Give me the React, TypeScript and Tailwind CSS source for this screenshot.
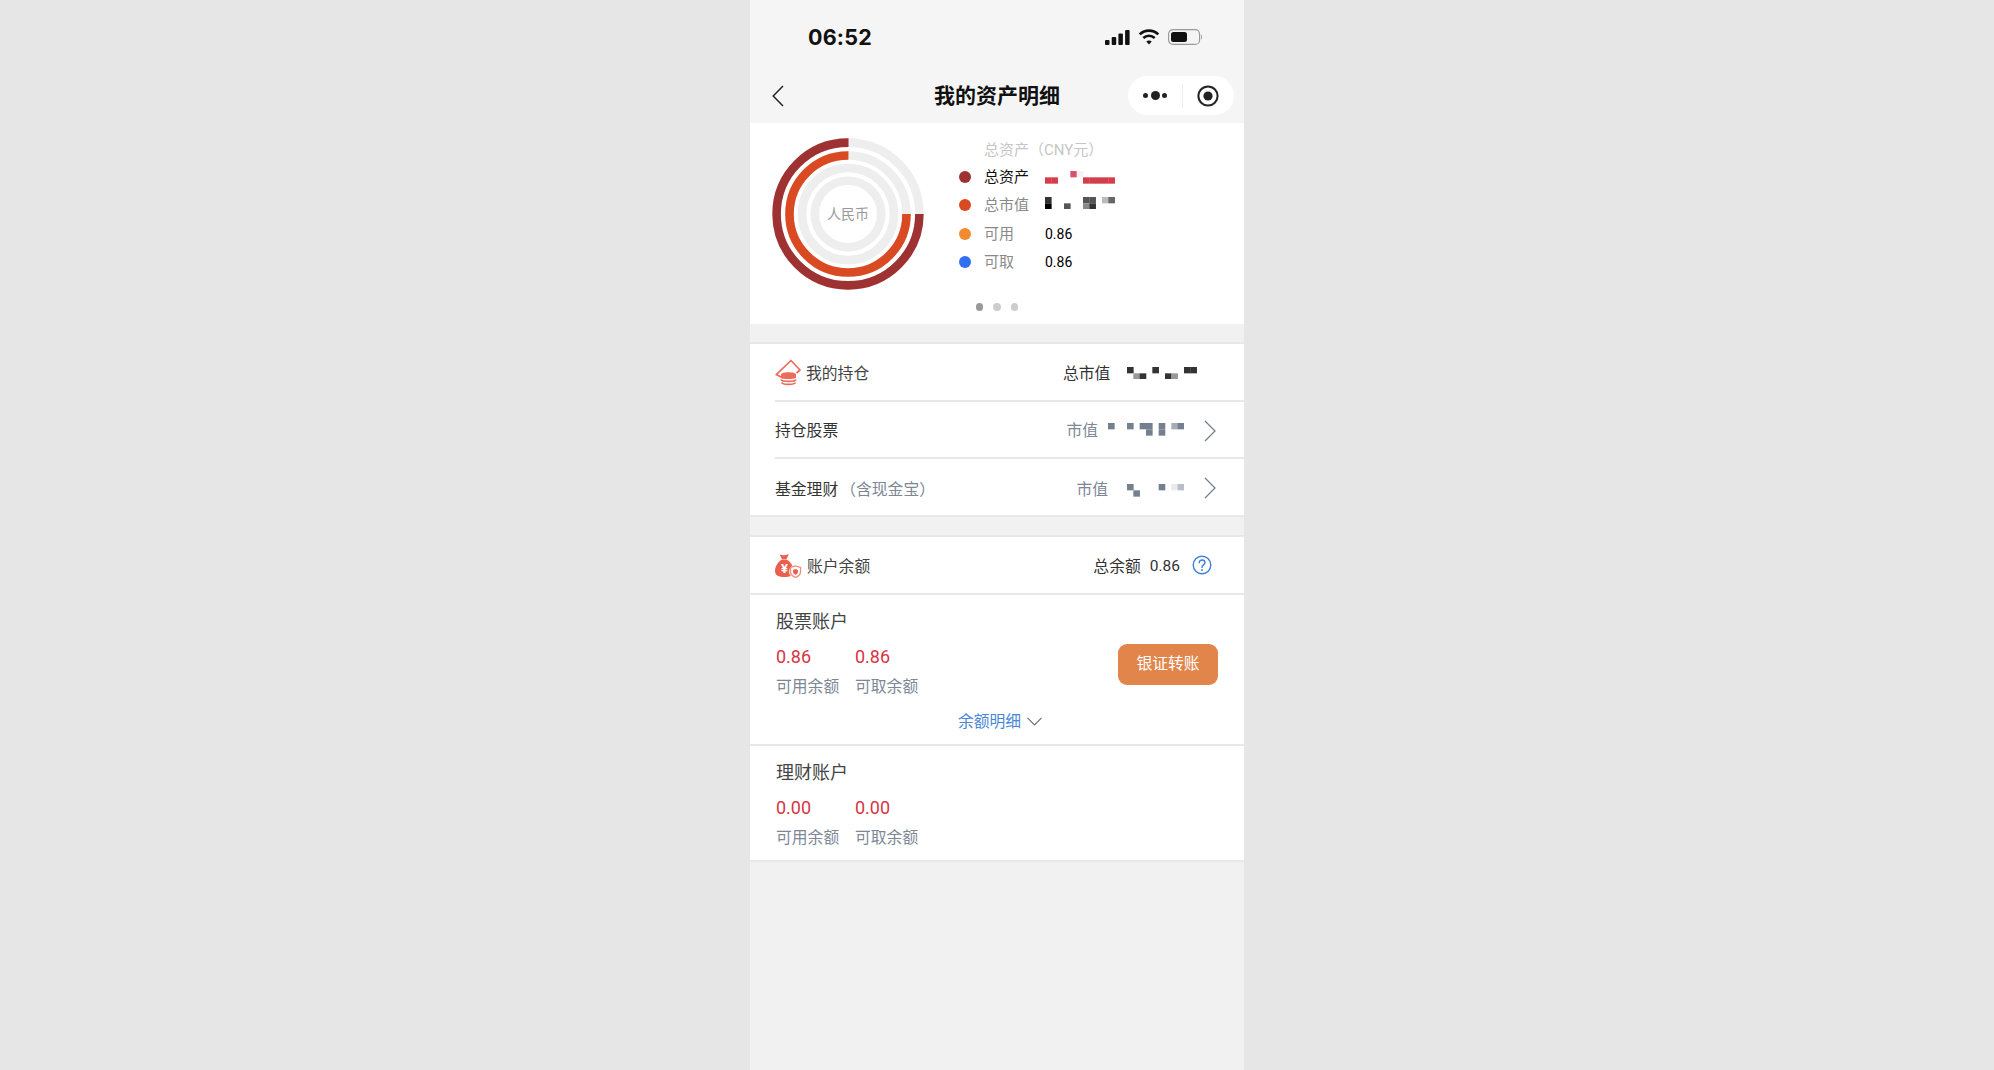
type Cell = [number, number, string];

const CJK = "font-['Roboto','Noto_Sans_CJK_SC',sans-serif]";

const cell = 19 / 3;

function Mosaic({ cols, rows = 2, cells, className }: { cols: number; rows?: number; cells: Cell[]; className?: string }) {
  return (
    <svg width={cols * cell} height={rows * cell} className={className}>
      {cells.map(([x, y, c], i) => (
        <rect key={i} x={x * cell} y={y * cell} width={cell + 0.3} height={cell} fill={c} />
      ))}
    </svg>
  );
}

const red = "#d43d4b";
const slate = "#75808f";

const mosaicAsset: Cell[] = [
  [0, 1, red], [1, 1, red], [4, 0, "#d6536b"], [5, 0, "#fbeef0"],
  [6, 1, red], [7, 1, red], [8, 1, red], [9, 1, red], [10, 1, red],
];
const mosaicLegend: Cell[] = [
  [0, 0, "#333333"], [0, 1, "#000000"], [3, 1, "#555555"],
  [6, 0, "#555555"], [7, 0, "#555555"], [6, 1, "#888888"], [7, 1, "#333333"],
  [9, 0, "#bbbbbb"], [10, 0, "#666666"],
];
const mosaicTotal: Cell[] = [
  [0, 0, "#333333"], [1, 1, "#999999"], [2, 1, "#333333"], [4, 0, "#333333"],
  [6, 1, "#333333"], [7, 1, "#999999"], [9, 0, "#333333"], [10, 0, "#333333"],
];
const mosaicStock: Cell[] = [
  [0, 0, slate], [3, 0, slate], [5, 0, slate], [6, 0, slate], [6, 1, slate],
  [8, 0, slate], [8, 1, slate], [10, 0, "#a5adb8"], [11, 0, slate],
];
const mosaicFund: Cell[] = [
  [0, 0, slate], [1, 1, slate], [5, 0, slate], [7, 0, "#e8eaed"], [8, 0, "#b8bec7"],
];

function StatusIcons() {
  return (
    <div className="flex items-center gap-[8px]">
      <svg width="25" height="15" viewBox="0 0 25 15" fill="#111">
        <rect x="0" y="10" width="4.5" height="5" rx="1" />
        <rect x="6.7" y="7" width="4.5" height="8" rx="1" />
        <rect x="13.4" y="3.5" width="4.5" height="11.5" rx="1" />
        <rect x="20.1" y="0" width="4.5" height="15" rx="1" />
      </svg>
      <svg width="22" height="16" viewBox="0 0 21 16" fill="none" stroke="#111" strokeWidth="2.6">
        <path d="M1.2 5.4 C6.5 0.4 14.5 0.4 19.8 5.4" />
        <path d="M4.8 9 C8 6 13 6 16.2 9" />
        <path d="M10.5 15.5 L7.8 12.4 C9.3 11.2 11.7 11.2 13.2 12.4 Z" fill="#111" stroke="none" />
      </svg>
      <svg width="35" height="16" viewBox="0 0 35 16" fill="none">
        <rect x="0.6" y="0.6" width="31" height="14.8" rx="4.5" stroke="#9a9a9a" strokeWidth="1.2" />
        <rect x="3" y="3" width="16" height="10" rx="2.5" fill="#111" />
        <path d="M33.2 5.5 C34.4 6 34.4 10 33.2 10.5 Z" fill="#9a9a9a" />
      </svg>
    </div>
  );
}

function Donut() {
  const rings = [
    { r: 71.4, color: "#9e3232", fill: true },
    { r: 58.5, color: "#d94a22", fill: true },
    { r: 46, color: "#eeeeee", fill: false },
    { r: 33.2, color: "#eeeeee", fill: false },
  ];
  return (
    <div className="relative w-[152px] h-[152px] shrink-0">
      <svg width="152" height="152" viewBox="-76 -76 152 152" fill="none">
        {rings.map((ring) => {
          const c = 2 * Math.PI * ring.r;
          return (
            <g key={ring.r}>
              <circle r={ring.r} stroke="#eeeeee" strokeWidth="8.6" />
              {ring.fill && (
                <circle r={ring.r} stroke={ring.color} strokeWidth="8.6" strokeDasharray={`${c * 0.75} ${c}`} />
              )}
            </g>
          );
        })}
      </svg>
      <div className="absolute inset-0 flex items-center justify-center text-[14px] text-[#999999]">人民币</div>
    </div>
  );
}

function LegendRow({ color, label, labelClass, children }: { color: string; label: string; labelClass: string; children: React.ReactNode }) {
  return (
    <div className="flex items-center h-[28px]">
      <span className="w-[12px] h-[12px] rounded-full" style={{ backgroundColor: color }} />
      <span className={`ml-[13px] w-[61px] text-[15px] ${labelClass}`}>{label}</span>
      {children}
    </div>
  );
}

function HoldingIcon({ className }: { className?: string }) {
  return (
    <svg width="26" height="27" viewBox="0 0 26 27" fill="none" className={className}>
      <path d="M8 19 L1.2 15.6 L16 1.5 L25 11 L21.5 14" stroke="#ee6a5a" strokeWidth="1.7" strokeLinejoin="round" />
      <path d="M6 15.5 C6 12.5 21 12.5 21 15.5 V18.5 C21 20.5 6 20.5 6 18.5 Z" fill="#ee6a5a" />
      <path d="M6 20.5 C6.5 23 20.5 23 21 20.5 M6.5 23.5 C7.5 26 19.5 26 20.5 23.5" stroke="#ee6a5a" strokeWidth="1.6" />
    </svg>
  );
}

function BagIcon({ className }: { className?: string }) {
  return (
    <svg width="27" height="25" viewBox="0 0 27 25" fill="none" className={className}>
      <path d="M4.5 1.5 Q9 3.2 14 1 L11.5 6 H7 Z" fill="#ea5f4d" />
      <path d="M7 6.5 H11.5 C16 9 18.8 14 18.8 18 C18.8 22.5 15 24 9.4 24 C3.8 24 0 22.5 0 18 C0 14 2.5 9 7 6.5 Z" fill="#ea5f4d" />
      <text x="9.4" y="19.5" textAnchor="middle" fontSize="13" fontWeight="700" fill="#ffffff" fontFamily="Roboto, sans-serif">¥</text>
      <circle cx="20.5" cy="18.5" r="6.5" fill="#ffffff" />
      <path d="M20.5 13 L25.5 14.5 V18.5 C25.5 21.5 23 23.5 20.5 24.5 C18 23.5 15.5 21.5 15.5 18.5 V14.5 Z" fill="none" stroke="#ee8a7c" strokeWidth="1.3" />
      <path d="M20.5 16 L23 17 V18.7 C23 20 22 21 20.5 21.7 C19 21 18 20 18 18.7 V17 Z" fill="#ea5f4d" />
    </svg>
  );
}

function HelpIcon({ className }: { className?: string }) {
  return (
    <svg width="20" height="20" viewBox="0 0 20 20" fill="none" className={className}>
      <circle cx="10" cy="10" r="8.8" stroke="#3f7fd6" strokeWidth="1.4" />
      <path d="M7.2 7.8 C7.2 3.9 13 4.2 13 7.6 C13 10 10 9.8 10 12.4" stroke="#3f7fd6" strokeWidth="1.4" strokeLinecap="round" />
      <circle cx="10" cy="15" r="0.95" fill="#3f7fd6" />
    </svg>
  );
}

function Chevron({ className }: { className?: string }) {
  return (
    <svg width="12" height="22" viewBox="0 0 12 22" fill="none" className={className}>
      <path d="M1 1 L11 11 L1 21" stroke="#75808f" strokeWidth="1.3" />
    </svg>
  );
}

function Stat({ value, label }: { value: string; label: string }) {
  return (
    <div className="w-[79px]">
      <div className="h-[26px] flex items-center text-[18px] text-[#d63644]">{value}</div>
      <div className="mt-[6px] h-[22px] flex items-center text-[15.8px] text-[#7d8796] whitespace-nowrap">{label}</div>
    </div>
  );
}

export default function App() {
  return (
    <div className={`min-h-screen bg-[#e6e6e6] flex justify-center ${CJK}`}>
      <div className="w-[494px] h-[1070px] bg-[#f1f1f1] flex flex-col">
        {/* status + nav */}
        <div className="bg-[#f5f5f5] h-[123px] shrink-0">
          <div className="h-[76px] pb-[2px] pl-[58px] pr-[41px] flex items-center justify-between">
            <span className="font-['Inter',sans-serif] text-[21.5px] font-bold text-[#111111] tracking-[0.2px]">06:52</span>
            <StatusIcons />
          </div>
          <div className="h-[47px] pb-[8px] grid grid-cols-[1fr_auto_1fr] items-center">
            <svg width="12" height="22" viewBox="0 0 12 22" fill="none" className="ml-[22px]">
              <path d="M11 1 L1.2 11 L11 21" stroke="#222222" strokeWidth="1.5" />
            </svg>
            <div className="pt-[3px] text-[21px] font-bold text-[#111111]">我的资产明细</div>
            <div className="justify-self-end mr-[10px] w-[106px] h-[39px] rounded-full bg-white flex items-center">
              <div className="w-[54px] flex items-center justify-center gap-[2.5px]">
                <span className="w-[5px] h-[5px] rounded-full bg-[#222222]" />
                <span className="w-[9px] h-[9px] rounded-full bg-[#222222]" />
                <span className="w-[5px] h-[5px] rounded-full bg-[#222222]" />
              </div>
              <div className="w-px h-[24px] bg-[#eeeeee]" />
              <svg width="24" height="24" viewBox="0 0 24 24" fill="none" className="ml-[13px]">
                <circle cx="12" cy="12" r="9.6" stroke="#222222" strokeWidth="2" />
                <circle cx="12" cy="12" r="4.6" fill="#222222" />
              </svg>
            </div>
          </div>
        </div>

        {/* chart */}
        <div className="bg-white h-[201px] shrink-0 pt-[15px]">
          <div className="flex pl-[22px]">
            <Donut />
            <div className="ml-[35px] -mt-[2px]">
              <div className="h-[27px] pt-[1px] flex items-center ml-[25px] text-[15px] text-[#c6c6c6]">总资产（CNY元）</div>
              <LegendRow color="#9e3232" label="总资产" labelClass="text-[#111111]">
                <Mosaic cols={11} cells={mosaicAsset} className="mt-[1px]" />
              </LegendRow>
              <LegendRow color="#d94a22" label="总市值" labelClass="text-[#8a8a8a]">
                <Mosaic cols={11} cells={mosaicLegend} className="-mt-[4px]" />
              </LegendRow>
              <div className="pt-[1px]">
                <LegendRow color="#f28a30" label="可用" labelClass="text-[#8a8a8a]">
                  <span className="text-[14px] text-black">0.86</span>
                </LegendRow>
                <LegendRow color="#2f6ff0" label="可取" labelClass="text-[#8a8a8a]">
                  <span className="text-[14px] text-black">0.86</span>
                </LegendRow>
              </div>
            </div>
          </div>
          <div className="mt-[13px] flex justify-center gap-[10px]">
            <span className="w-[7.5px] h-[7.5px] rounded-full bg-[#999999]" />
            <span className="w-[7.5px] h-[7.5px] rounded-full bg-[#cccccc]" />
            <span className="w-[7.5px] h-[7.5px] rounded-full bg-[#cccccc]" />
          </div>
        </div>

        {/* holdings */}
        <div className="mt-[18px] bg-white border-y-2 border-[#e8e8e8] shrink-0 text-[15.8px]">
          <div className="ml-[25px] h-[58px] pt-[3px] pr-[47px] border-b-2 border-[#e8e8e8] flex items-center justify-between">
            <div className="flex items-center gap-[5px] text-[#444444]">
              <HoldingIcon className="-mt-[3px]" />
              <span>我的持仓</span>
            </div>
            <div className="flex items-center text-[#333333]">
              <span>总市值</span>
              <Mosaic cols={11} cells={mosaicTotal} className="ml-[17px] -mt-[1px]" />
            </div>
          </div>
          <div className="ml-[25px] h-[57px] pt-[3px] pr-[28px] border-b-2 border-[#e8e8e8] flex items-center justify-between">
            <span className="text-[#333333]">持仓股票</span>
            <div className="flex items-center text-[#7d8796]">
              <span>市值</span>
              <Mosaic cols={12} cells={mosaicStock} className="ml-[10px] -mt-[3px]" />
              <Chevron className="ml-[20px] -mt-[1px]" />
            </div>
          </div>
          <div className="ml-[25px] h-[55.5px] pt-[7px] pr-[28px] flex items-center justify-between">
            <span className="text-[#333333]">
              基金理财<span className="ml-[2px] text-[#7d8796]">（含现金宝）</span>
            </span>
            <div className="flex items-center text-[#7d8796]">
              <span>市值</span>
              <Mosaic cols={9} cells={mosaicFund} className="ml-[19px] mt-[1px]" />
              <Chevron className="ml-[20px] -mt-[5px]" />
            </div>
          </div>
        </div>

        {/* balance */}
        <div className="mt-[18px] bg-white border-y-2 border-[#e8e8e8] shrink-0 text-[15.8px]">
          <div className="h-[58px] pt-[4px] pl-[25px] pr-[32px] border-b-2 border-[#e8e8e8] flex items-center justify-between">
            <div className="flex items-center gap-[5px] text-[#444444]">
              <BagIcon className="-mt-[3px]" />
              <span>账户余额</span>
            </div>
            <div className="flex items-center text-[#333333]">
              <span>总余额</span>
              <span className="ml-[9px] text-[15.5px]">0.86</span>
              <HelpIcon className="ml-[12px] -mt-[4px]" />
            </div>
          </div>

          <div className="h-[151px] px-[26px] border-b-2 border-[#e8e8e8]">
            <div className="pt-[15px] h-[49px] text-[18px] leading-[24px] text-[#444444]">股票账户</div>
            <div className="flex items-start justify-between">
              <div className="flex">
                <Stat value="0.86" label="可用余额" />
                <Stat value="0.86" label="可取余额" />
              </div>
              <button className="w-[100px] h-[41px] rounded-[9px] bg-[#e1854a] text-white text-[15.8px]">银证转账</button>
            </div>
            <div className="mt-[13px] h-[22px] flex items-center justify-center text-[#4a86d8] pl-[6px]">
              <span>余额明细</span>
              <svg width="15" height="9" viewBox="0 0 15 9" fill="none" className="ml-[6px]">
                <path d="M0.5 0.8 L7.5 8 L14.5 0.8" stroke="#666d78" strokeWidth="1.1" />
              </svg>
            </div>
          </div>

          <div className="h-[114px] px-[26px]">
            <div className="pt-[15px] h-[49px] text-[18px] leading-[24px] text-[#444444]">理财账户</div>
            <div className="flex">
              <Stat value="0.00" label="可用余额" />
              <Stat value="0.00" label="可取余额" />
            </div>
          </div>
        </div>
      </div>
    </div>
  );
}
